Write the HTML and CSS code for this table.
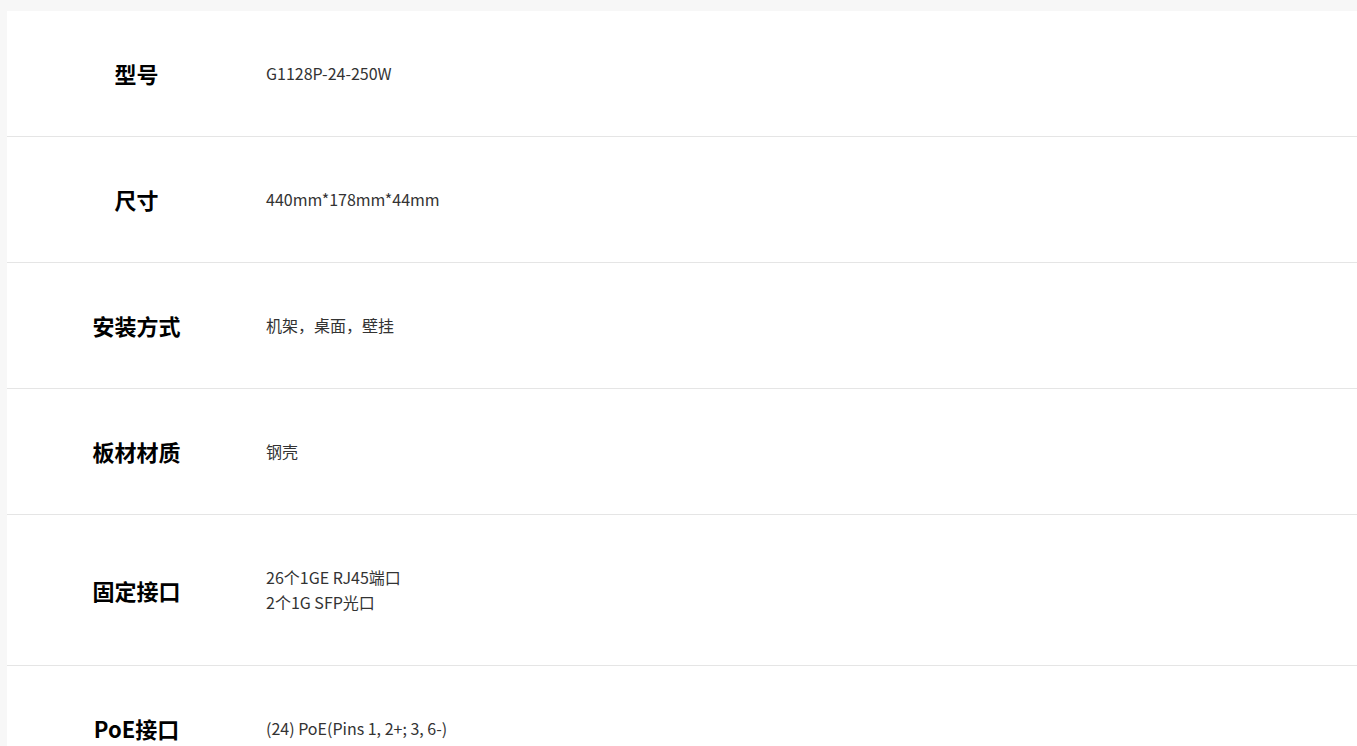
FILE: index.html
```html
<!DOCTYPE html>
<html lang="zh-CN">
<head>
  <meta charset="UTF-8">
  <meta name="viewport" content="width=device-width, initial-scale=1.0">
  <title>产品参数</title>
  <link rel="stylesheet" href="styles.css">
</head>
<body>
  <div class="spec-table">
    <div class="spec-row">
      <div class="spec-label">型号</div>
      <div class="spec-value">G1128P-24-250W</div>
    </div>
    <div class="spec-row">
      <div class="spec-label">尺寸</div>
      <div class="spec-value">440mm*178mm*44mm</div>
    </div>
    <div class="spec-row">
      <div class="spec-label">安装方式</div>
      <div class="spec-value">机架，桌面，壁挂</div>
    </div>
    <div class="spec-row">
      <div class="spec-label">板材材质</div>
      <div class="spec-value">钢壳</div>
    </div>
    <div class="spec-row">
      <div class="spec-label">固定接口</div>
      <div class="spec-value">26个1GE RJ45端口<br>2个1G SFP光口</div>
    </div>
    <div class="spec-row">
      <div class="spec-label">PoE接口</div>
      <div class="spec-value">(24) PoE(Pins 1, 2+; 3, 6-)</div>
    </div>
  </div>
</body>
</html>
```

FILE: styles.css
```css
body {
  margin: 0;
  background-color: #f7f7f7;
  font-family: "Noto Sans CJK SC", "Noto Sans", sans-serif;
  color: #333;
}

.spec-table {
  margin: 11px 0 0 7px;
  background-color: #fff;
}

.spec-row {
  display: flex;
  align-items: center;
  padding: 50px 0;
  border-bottom: 1px solid #e5e5e5;
}

.spec-label {
  width: 259px;
  flex-shrink: 0;
  text-align: center;
  font-size: 22px;
  font-weight: bold;
  line-height: 25px;
  color: #000;
}

.spec-value {
  font-size: 16px;
  line-height: 25px;
  color: #333;
}
```
